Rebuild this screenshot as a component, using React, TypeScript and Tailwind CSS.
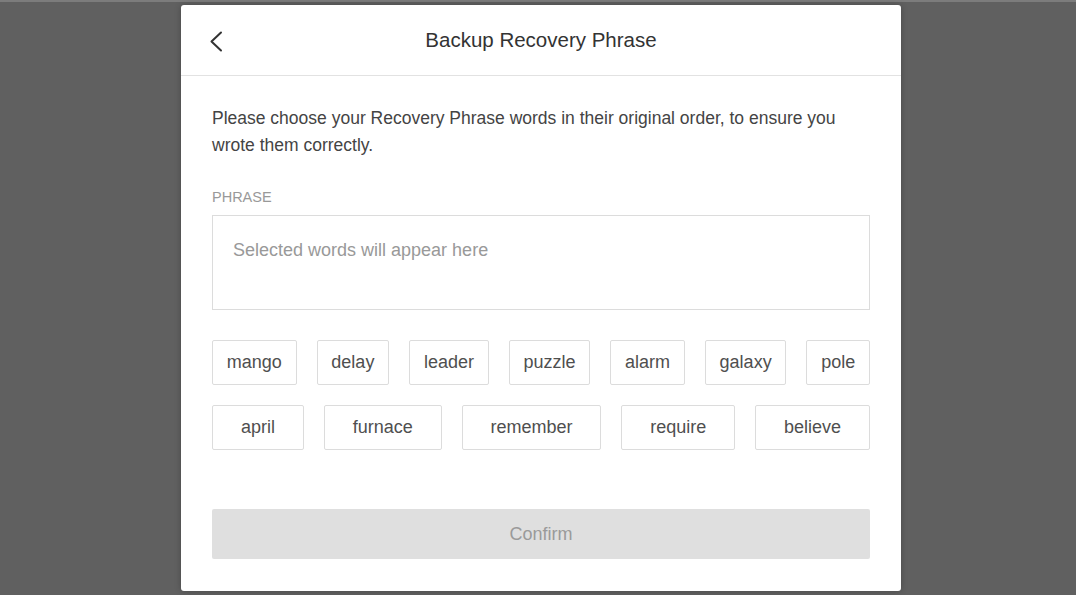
const rowOne = ['mango', 'delay', 'leader', 'puzzle', 'alarm', 'galaxy', 'pole'];
const rowTwo = ['april', 'furnace', 'remember', 'require', 'believe'];

function WordChip({ word }: { word: string }) {
  return (
    <button className="h-[45px] grow rounded-[2px] border border-[#dcdcdc] bg-white px-[13px] text-[18px] text-[#4f4f4f]">
      {word}
    </button>
  );
}

export default function App() {
  return (
    <div className="flex h-[595px] w-full flex-col bg-[#606060] font-['Liberation_Sans',Arial,sans-serif]">
      <div className="h-[2px] bg-[#7c7c7c]" />
      <div className="flex justify-center pl-[6px] pt-[3px]">
        <div className="flex h-[586px] w-[720px] flex-col rounded-[3px] bg-white shadow-[0_0_6px_rgba(0,0,0,0.25)]">
          <header className="relative flex h-[71px] shrink-0 items-center justify-center border-b border-[#e2e2e2]">
            <button className="absolute left-[28px] top-[26px] text-[#333]">
              <svg width="14" height="21" viewBox="0 0 14 21" fill="none">
                <polyline points="12,1.5 2.5,10.5 12,19.5" stroke="currentColor" strokeWidth="2" strokeLinecap="round" strokeLinejoin="round" />
              </svg>
            </button>
            <h1 className="text-[20.5px] text-[#333]">Backup Recovery Phrase</h1>
          </header>

          <div className="flex flex-col px-[31px] pt-[29px]">
            <p className="text-[17.5px] leading-[27px] text-[#444]">
              Please choose your Recovery Phrase words in their original order, to ensure you wrote them correctly.
            </p>

            <div className="mt-[30px] text-[14.5px] uppercase leading-[16px] text-[#999]">Phrase</div>
            <div className="mt-[10px] h-[95px] border border-[#dcdcdc] px-[20px] pt-[21px] text-[18px] text-[#999]">
              Selected words will appear here
            </div>

            <div className="mt-[30px] flex gap-5">
              {rowOne.map((w) => (
                <WordChip key={w} word={w} />
              ))}
            </div>
            <div className="mt-[20px] flex gap-5">
              {rowTwo.map((w) => (
                <WordChip key={w} word={w} />
              ))}
            </div>

            <button className="mt-[59px] h-[50px] rounded-[2px] bg-[#dfdfdf] text-[18px] text-[#9a9a9a]">
              Confirm
            </button>
          </div>
        </div>
      </div>
    </div>
  );
}
